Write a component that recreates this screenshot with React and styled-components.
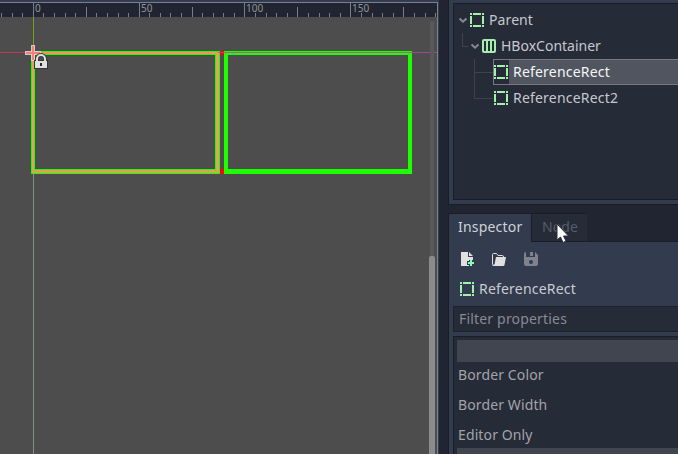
import React from 'react';
import styled, { createGlobalStyle } from 'styled-components';

const GlobalStyle = createGlobalStyle`
  * { box-sizing: border-box; }
  body { margin: 0; overflow: hidden; background: #202431; }
`;

const Editor = styled.div`
  display: flex;
  width: 678px;
  height: 454px;
  overflow: hidden;
  background: #212531;
  font: 14px/20px "Noto Sans", sans-serif;
  color: #c8cbd0;
`;

const ViewportPane = styled.section`
  display: flex;
  flex-direction: column;
  width: 439px;
  height: 454px;
  border-top: 2px solid #333b4f;
  border-right: 1px solid #333b4f;
`;

const ViewportFrame = styled.div`
  display: flex;
  flex-direction: column;
  flex: 1;
  border-top: 1px solid #7a8092;
  border-right: 1px solid #7a8092;
`;

const Ruler = styled.svg`
  display: block;
  flex: none;
  width: 437px;
  height: 14px;
  overflow: visible;
  background: #212531;
  font: 10px "Noto Sans", sans-serif;
`;

const Canvas = styled.div`
  position: relative;
  flex: 1;
  overflow: hidden;
  background: #4d4d4d;
`;

const GuideLine = styled.div`
  position: absolute;
  left: ${p => p.$x}px;
  top: ${p => p.$y}px;
  width: ${p => p.$w}px;
  height: ${p => p.$h}px;
  background: ${p => p.$color};
`;

const RectNode = styled.div`
  position: absolute;
  left: ${p => p.$x}px;
  top: 34px;
  width: ${p => p.$w}px;
  height: 123px;
  border: solid #1eff00;
  border-width: ${p => p.$border};
`;

const SelectionOutline = styled.div`
  position: absolute;
  inset: -3px -4px -4px -3px;
  border-style: solid;
  border-width: 2px 3px 3px 2px;
  border-color: #ee9657 #d9a856 #d9a352 #d9a856;
`;

const Overlay = styled.svg`
  position: absolute;
  left: ${p => p.$x}px;
  top: ${p => p.$y}px;
`;

const ScrollTrack = styled.div`
  position: absolute;
  left: 430px;
  top: 4px;
  bottom: 0;
  width: 4px;
  border-radius: 2px 2px 0 0;
  background: #595959;
`;

const ScrollThumb = styled.div`
  position: absolute;
  left: -1px;
  top: 235px;
  bottom: 0;
  width: 6px;
  border-radius: 2px 2px 0 0;
  background: #8a8b8a;
`;

const Docks = styled.aside`
  display: flex;
  flex-direction: column;
  width: 230px;
  margin-left: 9px;
`;

const SceneDock = styled.section`
  height: 205px;
  padding: 3px 0 4px 4px;
  background: #333b4f;
  border-left: 1px solid #191d27;
  border-bottom: 1px solid #191d27;
`;

const Tree = styled.div`
  height: 197px;
  padding: 3px 0 0 4px;
  background: #262b38;
  border: 1px solid #191d27;
  border-right: 0;
`;

const TreeRow = styled.div`
  display: flex;
  align-items: center;
  height: 26px;
`;

const Arm = styled.svg`
  display: block;
  flex: none;
`;

const TreeItem = styled.div`
  display: flex;
  align-items: center;
  flex: 1;
  height: 26px;
  padding-left: ${p => (p.$leaf ? 0 : 1)}px;
  color: ${p => (p.$selected ? '#f4f5f6' : '#c5c8cd')};
  background: ${p => (p.$selected ? 'linear-gradient(90deg, #262b38 16px, #515560 16px)' : 'none')};
  box-shadow: ${p => (p.$selected ? 'inset 1px 1px #757984, inset 0 -1px #757984' : 'none')};
`;

const Label = styled.span`
  margin-left: 4px;
  letter-spacing: ${p => p.$spacing ?? 0}px;
  white-space: nowrap;
`;

const TabBar = styled.div`
  display: flex;
  height: 29px;
  margin-top: 8px;
`;

const Tab = styled.div`
  width: ${p => p.$w}px;
  height: ${p => (p.$active ? 29 : 28)}px;
  padding: 3px 0 0 ${p => (p.$active ? 9 : 10)}px;
  background: ${p => (p.$active ? '#333b4f' : '#262b38')};
  color: ${p => (p.$active ? '#cfd2d7' : '#575c67')};
  letter-spacing: ${p => (p.$active ? 0.2 : 0.1)}px;
  border: solid #191d27;
  border-width: ${p => (p.$active ? '1px 1px 0 1px' : '1px 0 0 0')};
`;

const TabLine = styled.div`
  display: flex;
  flex: 1;
  border-bottom: 1px solid #191d27;
`;

const Inspector = styled.section`
  display: flex;
  flex-direction: column;
  flex: 1;
  padding-left: 4px;
  background: #333b4f;
  border-left: 1px solid #191d27;
`;

const Toolbar = styled.div`
  display: flex;
  gap: 16px;
  height: 32px;
  padding: 9px 0 0 6px;
`;

const ObjectRow = styled.div`
  display: flex;
  align-items: center;
  height: 30px;
  padding-left: 6px;
  color: #c8cbd0;
`;

const Filter = styled.div`
  height: 26px;
  margin-top: 2px;
  padding: 2px 0 0 5px;
  background: #262b38;
  border: 1px solid #1d212c;
  border-right: 0;
  color: #868a93;
  letter-spacing: 0.18px;
`;

const PropertyList = styled.div`
  flex: 1;
  margin-top: 4px;
  padding: 3px 0 0 3px;
  background: #262b38;
  border: 1px solid #191d27;
  border-width: 1px 0 0 1px;
`;

const Category = styled.div`
  height: 22px;
  background: #404550;
`;

const Property = styled.div`
  height: 30px;
  padding: 3px 0 0 1px;
  color: #a2a4a8;
  letter-spacing: 0.12px;
`;

const PropertyGroup = styled.div`
  height: 86px;
`;

const Pointer = styled.svg`
  position: absolute;
  left: 556px;
  top: 223px;
`;

const majors = [33, 139, 244, 350];
const mids = [86, 192, 297, 403];
const minors = [1, 12, 22, 43, 54, 65, 75, 96, 107, 118, 128, 149, 160, 170, 181,
  202, 213, 223, 234, 255, 266, 276, 287, 308, 319, 329, 340, 361, 372, 382, 393, 414, 425, 435];

function Ticks() {
  return (
    <Ruler viewBox="0 0 437 14" shapeRendering="crispEdges">
      {majors.map(x => <rect key={x} x={x} width="1" height="14" fill="#7a7d86" />)}
      {mids.map(x => <rect key={x} x={x} y="4" width="1" height="10" fill="#7a7d86" />)}
      {minors.map(x => <rect key={x} x={x} y="10" width="1" height="4" fill="#7a7d86" />)}
      {majors.map((x, i) => <text key={x} x={x + 2} y="9" fill="#90939a">{i * 50}</text>)}
    </Ruler>
  );
}

function RectIcon() {
  return (
    <Arm width="16" height="16" viewBox="0 0 16 16" fill="#a5efac" shapeRendering="crispEdges">
      <path d="M1 1h2v2H1zM4 1h8v2H4zM13 1h2v2h-2zM1 13h2v2H1zM4 13h8v2H4zM13 13h2v2h-2zM1 4h2v8H1zM13 4h2v8h-2z" />
    </Arm>
  );
}

function HBoxIcon() {
  return (
    <Arm width="16" height="16" viewBox="0 0 16 16">
      <path fill="#a5efac" fillRule="evenodd" d="M3 1h10a2 2 0 0 1 2 2v10a2 2 0 0 1-2 2H3a2 2 0 0 1-2-2V3a2 2 0 0 1 2-2zM3 3v10h2V3zM7 3v10h2V3zM11 3v10h2V3z" />
    </Arm>
  );
}

function Chevron() {
  return <path d="M-3.5-2L0 1.2L3.5-2" fill="none" stroke="#858993" strokeWidth="2" />;
}

export default function App() {
  return (
    <>
      <GlobalStyle />
      <Editor>
        <ViewportPane>
          <ViewportFrame>
            <Ticks />
            <Canvas>
              <GuideLine $x={33} $y={0} $w={1} $h={34} $color="#70a31a" />
              <GuideLine $x={33} $y={157} $w={1} $h={280} $color="#7a9580" />
              <GuideLine $x={0} $y={35} $w={31} $h={1} $color="#c13b51" />
              <GuideLine $x={220} $y={34} $w={4} $h={4} $color="#ff0000" />
              <GuideLine $x={220} $y={152} $w={4} $h={5} $color="#ff0000" />
              <RectNode $x={31} $w={189} $border="4px 5px 5px 4px"><SelectionOutline /></RectNode>
              <RectNode $x={224} $w={188} $border="4px 4px 5px 4px" />
              <GuideLine $x={218} $y={35} $w={219} $h={1} $color="rgba(190,65,165,.8)" />
              <Overlay $x={25} $y={28} width="24" height="26" viewBox="0 0 24 26">
                <path d="M6 0h4v6h6v4h-6v6H6v-6H0V6h6z" fill="#e5ddd8" fillOpacity=".85" />
                <path d="M7 1h2v6h6v2H9v6H7V9H1V7h6z" fill="#ff7b7b" />
              </Overlay>
              <Overlay $x={33} $y={36} width="16" height="17" viewBox="0 0 16 17">
                <path d="M4 8V6a4 4 0 0 1 8 0v2" fill="none" stroke="#353b36" strokeWidth="4" />
                <path d="M1 7h14v9H1z" fill="#353535" />
                <path d="M4 8V6a4 4 0 0 1 8 0v2" fill="none" stroke="#e0e0e0" strokeWidth="2" />
                <path d="M2 8h12v7H2z" fill="#e0e0e0" />
                <path d="M7 10h2v3H7z" fill="#292929" />
              </Overlay>
              <ScrollTrack><ScrollThumb /></ScrollTrack>
            </Canvas>
          </ViewportFrame>
        </ViewportPane>
        <Docks>
          <SceneDock>
            <Tree>
              <TreeRow>
                <Arm width="10" height="26"><g transform="translate(5 13.5)"><Chevron /></g></Arm>
                <TreeItem><RectIcon /><Label $spacing={0.1}>Parent</Label></TreeItem>
              </TreeRow>
              <TreeRow>
                <Arm width="22" height="26">
                  <path d="M4.5 0V13.5H10" fill="none" stroke="#3d424e" />
                  <g transform="translate(17 13.5)"><Chevron /></g>
                </Arm>
                <TreeItem><HBoxIcon /><Label>HBoxContainer</Label></TreeItem>
              </TreeRow>
              <TreeRow>
                <Arm width="35" height="26"><path d="M16.5 0V26M16.5 13.5H35" fill="none" stroke="#3d424e" /></Arm>
                <TreeItem $leaf $selected><RectIcon /><Label $spacing={0.2}>ReferenceRect</Label></TreeItem>
              </TreeRow>
              <TreeRow>
                <Arm width="35" height="26"><path d="M16.5 0V13.5H35" fill="none" stroke="#3d424e" /></Arm>
                <TreeItem $leaf><RectIcon /><Label $spacing={0.2}>ReferenceRect2</Label></TreeItem>
              </TreeRow>
            </Tree>
          </SceneDock>
          <TabBar>
            <Tab $active $w={84}>Inspector</Tab>
            <TabLine><Tab $w={55}>Node</Tab></TabLine>
          </TabBar>
          <Inspector>
            <Toolbar>
              <Arm width="16" height="16" viewBox="0 0 16 16">
                <path d="M2 1h7v5h5v3h-4v1H8v4h2v1H2zM10 1l4 4h-4z" fill="#e0e0e0" />
                <path d="M11 9h2v2h2v2h-2v2h-2v-2H9v-2h2z" fill="#84ffb1" />
              </Arm>
              <Arm width="16" height="16" viewBox="0 0 16 16">
                <path d="M1.500 13V3.500Q1.500 2.500 2.500 2.500H5.500L7 4.500H11.500Q12.500 4.500 12.500 6" fill="none" stroke="#e0e0e0" />
                <path d="M5 6h10l-1.500 8q-.2 1-1.500 1H2.500Q1 15 1 13L2 13.500H3.500z" fill="#e0e0e0" />
              </Arm>
              <Arm width="16" height="16" viewBox="0 0 16 16">
                <path fillRule="evenodd" d="M3 1h9l3 3v9a2 2 0 0 1-2 2H3a2 2 0 0 1-2-2V3a2 2 0 0 1 2-2zM3 1v5h9V1h-2v4H7V1zM8 9a2 2 0 0 0 0 4a2 2 0 0 0 0-4z" fill="#7e838e" />
              </Arm>
            </Toolbar>
            <ObjectRow><RectIcon /><Label $spacing={0.2}>ReferenceRect</Label></ObjectRow>
            <Filter>Filter properties</Filter>
            <PropertyList>
              <Category />
              <PropertyGroup>
                <Property>Border Color</Property>
                <Property>Border Width</Property>
                <Property>Editor Only</Property>
              </PropertyGroup>
              <Category />
            </PropertyList>
          </Inspector>
        </Docks>
        <Pointer width="16" height="22" viewBox="0 0 16 22">
          <path d="M1 1V17L4.500 14L7 19.500L10 18L7.500 13H12.500Z" fill="white" stroke="#2b303c" />
        </Pointer>
      </Editor>
    </>
  );
}
